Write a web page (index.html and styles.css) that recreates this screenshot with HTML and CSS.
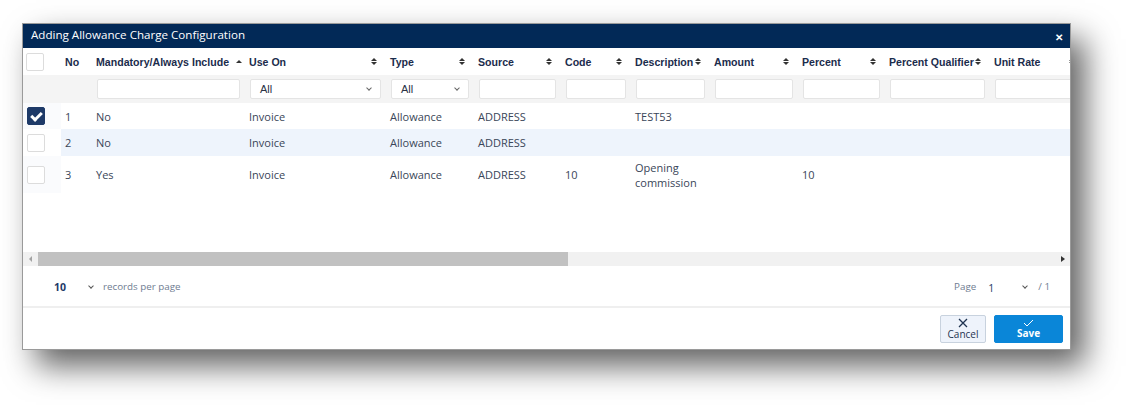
FILE: index.html
```html
<!DOCTYPE html>
<html lang="en">
<head>
  <meta charset="UTF-8" />
  <title>Adding Allowance Charge Configuration</title>
  <link rel="stylesheet" href="styles.css">
</head>
<body>
  <div class="dialog">
    <div class="dialog-header">
      <span class="dialog-title">Adding Allowance Charge Configuration</span>
      <span class="close">&#x2715;</span>
    </div>

    <div class="grid">
      <div class="grid-scroll">
        <table class="grid-table">
          <colgroup>
            <col class="c-check"><col class="c-no"><col class="c-mand"><col class="c-use">
            <col class="c-type"><col class="c-src"><col class="c-code"><col class="c-desc">
            <col class="c-amt"><col class="c-pct"><col class="c-pq"><col class="c-unit">
          </colgroup>
          <thead>
            <tr class="head-row">
              <th><span class="checkbox"></span></th>
              <th>No</th>
              <th><div class="th-inner start">Mandatory/Always Include <span class="sort asc"></span></div></th>
              <th><div class="th-inner">Use On <span class="sort"></span></div></th>
              <th><div class="th-inner">Type <span class="sort"></span></div></th>
              <th><div class="th-inner">Source <span class="sort"></span></div></th>
              <th><div class="th-inner">Code <span class="sort"></span></div></th>
              <th><div class="th-inner">Description <span class="sort"></span></div></th>
              <th><div class="th-inner">Amount <span class="sort"></span></div></th>
              <th><div class="th-inner">Percent <span class="sort"></span></div></th>
              <th><div class="th-inner">Percent Qualifier <span class="sort"></span></div></th>
              <th><div class="th-inner">Unit Rate <span class="sort"></span></div></th>
            </tr>
            <tr class="filter-row">
              <td></td>
              <td></td>
              <td><div class="filter"></div></td>
              <td><div class="filter select">All</div></td>
              <td><div class="filter select">All</div></td>
              <td><div class="filter"></div></td>
              <td><div class="filter"></div></td>
              <td><div class="filter"></div></td>
              <td><div class="filter"></div></td>
              <td><div class="filter"></div></td>
              <td><div class="filter"></div></td>
              <td><div class="filter"></div></td>
            </tr>
          </thead>
          <tbody>
            <tr>
              <td class="check-cell"><span class="checkbox checked"></span></td>
              <td>1</td><td>No</td><td>Invoice</td><td>Allowance</td><td>ADDRESS</td>
              <td></td><td>TEST53</td><td></td><td></td><td></td><td></td>
            </tr>
            <tr class="alt">
              <td class="check-cell"><span class="checkbox"></span></td>
              <td>2</td><td>No</td><td>Invoice</td><td>Allowance</td><td>ADDRESS</td>
              <td></td><td></td><td></td><td></td><td></td><td></td>
            </tr>
            <tr class="tall">
              <td class="check-cell"><span class="checkbox"></span></td>
              <td>3</td><td>Yes</td><td>Invoice</td><td>Allowance</td><td>ADDRESS</td>
              <td>10</td><td>Opening commission</td><td></td><td>10</td><td></td><td></td>
            </tr>
          </tbody>
        </table>
      </div>

      <div class="hscroll">
        <span class="arrow left"></span>
        <div class="track"><div class="thumb"></div></div>
        <span class="arrow right"></span>
      </div>
    </div>

    <div class="pager">
      <div class="page-size">
        <span class="size-value">10</span>
        <span class="chevron"></span>
        <span class="muted">records per page</span>
      </div>
      <div class="page-nav">
        <span class="muted">Page</span>
        <span class="page-value">1</span>
        <span class="chevron"></span>
        <span class="muted">/ 1</span>
      </div>
    </div>

    <div class="dialog-footer">
      <button class="btn btn-cancel">
        <svg width="10" height="10" viewBox="0 0 10 10"><path d="M1 1 L9 9 M9 1 L1 9" stroke="#1f3350" stroke-width="1.3" fill="none"/></svg>
        <span>Cancel</span>
      </button>
      <button class="btn btn-save">
        <svg width="11" height="8" viewBox="0 0 11 8"><path d="M1 4 L4 7 L10 1" stroke="#fff" stroke-width="1" fill="none"/></svg>
        <span>Save</span>
      </button>
    </div>
  </div>
</body>
</html>
```

FILE: styles.css
```css
html,
body {
  height: 100%;
}

body {
  margin: 0;
  padding: 23px 0 0 22px;
  min-height: 405px;
  box-sizing: border-box;
  background: #fff;
  font-family: "Open Sans", sans-serif;
}

.dialog {
  width: 1049px;
  height: 327px;
  border: 1px solid #9a9a9a;
  background: #fff;
  box-shadow: 14px 16px 30px rgba(0, 0, 0, 0.62);
  display: flex;
  flex-direction: column;
  box-sizing: border-box;
}

.dialog-header {
  height: 24px;
  background: #022957;
  color: #fff;
  display: flex;
  align-items: center;
  justify-content: space-between;
  padding: 0 7px 3px 8px;
  box-sizing: border-box;
  flex-shrink: 0;
}

.dialog-title {
  font-size: 11.6px;
}

.close {
  font-size: 10px;
  font-weight: bold;
  margin-top: 4px;
}

/* grid */
.grid-scroll {
  height: 204px;
  overflow: hidden;
}

.grid-table {
  border-collapse: collapse;
  table-layout: fixed;
  width: 1060px;
}

.c-check { width: 38px; }
.c-no { width: 30px; }
.c-mand { width: 153px; }
.c-use { width: 141px; }
.c-type { width: 88px; }
.c-src { width: 87px; }
.c-code { width: 70px; }
.c-desc { width: 79px; }
.c-amt { width: 88px; }
.c-pct { width: 87px; }
.c-pq { width: 105px; }
.c-unit { width: 94px; }

.head-row th {
  height: 27px;
  padding: 0 8px 0 4px;
  text-align: left;
  font-family: "Liberation Sans", Arial, sans-serif;
  font-size: 10.6px;
  font-weight: bold;
  color: #1b2c4c;
  white-space: nowrap;
}

.head-row th:nth-child(n+3) {
  padding-left: 5px;
}

.head-row th:first-child {
  padding: 0 0 0 3px;
}

.th-inner {
  display: flex;
  align-items: center;
  justify-content: space-between;
}

.th-inner.start {
  justify-content: flex-start;
  gap: 7px;
}

.sort {
  display: inline-flex;
  flex-direction: column;
  gap: 1px;
}

.sort::before,
.sort::after {
  content: "";
  border-left: 3px solid transparent;
  border-right: 3px solid transparent;
}

.sort::before {
  border-bottom: 3px solid #333;
}

.sort::after {
  border-top: 3px solid #333;
}

.sort.asc::after {
  display: none;
}

.filter-row td {
  height: 28px;
  background: #f4f4f4;
  padding: 0 4px 0 6px;
  vertical-align: top;
}

.filter {
  margin-top: 4px;
  height: 20px;
  background: #fff;
  border: 1px solid #e4e4e4;
  border-radius: 2px;
  box-sizing: border-box;
}

.filter.select {
  font-family: "Liberation Sans", Arial, sans-serif;
  font-size: 11px;
  color: #2a3245;
  padding: 0 0 0 9px;
  line-height: 18px;
  position: relative;
}

.filter.select::after {
  content: "";
  position: absolute;
  right: 9px;
  top: 6px;
  width: 3px;
  height: 3px;
  border-right: 1px solid #666;
  border-bottom: 1px solid #666;
  transform: rotate(45deg);
}

tbody td {
  height: 26px;
  padding: 0 6px 0 5px;
  font-size: 11px;
  color: #3a4658;
  line-height: 15px;
}

tbody td:nth-child(2) {
  padding-left: 4px;
}

tbody tr.alt td {
  height: 27px;
  background: #eef4fc;
}

tbody tr.tall td {
  height: 37px;
}

tbody td.check-cell {
  padding: 0 0 0 4px;
  background: #fafbfd;
}

tbody tr.alt td.check-cell {
  background: #fff;
}

.checkbox {
  display: block;
  width: 18px;
  height: 18px;
  border: 1px solid #dcdcdc;
  border-radius: 2px;
  background: #fff;
  box-sizing: border-box;
  position: relative;
}

.checkbox.checked {
  background: #1e3a68;
  border-color: #1e3a68;
}

.checkbox.checked::after {
  content: "";
  position: absolute;
  left: 5px;
  top: 2px;
  width: 4px;
  height: 8px;
  border-right: 3px solid #fff;
  border-bottom: 3px solid #fff;
  transform: rotate(45deg);
}

/* horizontal scrollbar */
.hscroll {
  height: 14px;
  display: flex;
  align-items: center;
  background: #f1f1f1;
}

.arrow {
  width: 15px;
  display: flex;
  justify-content: center;
}

.arrow::before {
  content: "";
  border-top: 3px solid transparent;
  border-bottom: 3px solid transparent;
}

.arrow.left::before {
  border-right: 3px solid #a3a3a3;
}

.arrow.right::before {
  border-left: 4px solid #333;
}

.track {
  flex: 1;
  height: 14px;
}

.thumb {
  width: 530px;
  height: 14px;
  background: #c1c1c1;
}

/* pager */
.pager {
  height: 40px;
  display: flex;
  align-items: center;
  justify-content: space-between;
  padding: 0 20px 0 31px;
  font-size: 9.8px;
  border-bottom: 2px solid #efefef;
  flex-shrink: 0;
}

.page-size,
.page-nav {
  display: flex;
  align-items: center;
}

.size-value {
  font-size: 10.5px;
  font-weight: bold;
  color: #1e3a68;
  margin-top: 2px;
}

.page-size .chevron {
  margin: 0 10px 0 23px;
}

.page-value {
  font-size: 10.5px;
  color: #1e3a68;
  margin: 3px 0 0 12px;
}

.page-nav .chevron {
  margin: 0 11px 0 29px;
}

.chevron {
  width: 3px;
  height: 3px;
  border-right: 1px solid #555;
  border-bottom: 1px solid #555;
  transform: rotate(45deg);
  margin-bottom: 3px;
}

.muted {
  color: #6f7c91;
}

/* footer buttons */
.dialog-footer {
  flex: 1;
  display: flex;
  justify-content: flex-end;
  align-items: center;
  gap: 8px;
  padding: 0 7px 0 0;
}

.btn {
  height: 28px;
  border-radius: 2px;
  display: flex;
  flex-direction: column;
  align-items: center;
  justify-content: center;
  gap: 1px;
  font-family: "Open Sans", sans-serif;
  font-size: 10px;
  line-height: 11px;
  padding: 0;
  cursor: pointer;
}

.btn-cancel {
  width: 46px;
  background: #eef3fb;
  border: 1px solid #c8d2de;
  color: #1f3350;
}

.btn-save {
  width: 69px;
  background: #0a86d8;
  border: 1px solid #0a86d8;
  color: #fff;
  font-weight: bold;
}
```
